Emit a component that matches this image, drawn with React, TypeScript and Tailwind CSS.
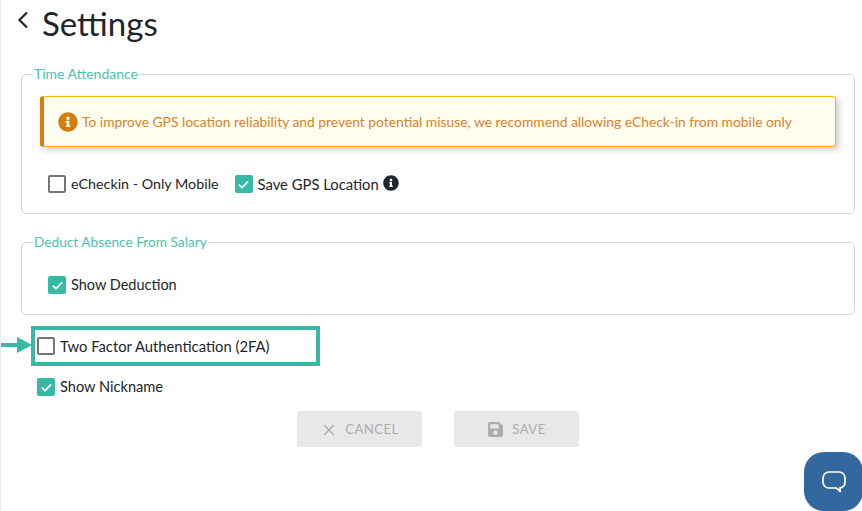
import { FaInfoCircle, FaSave } from "react-icons/fa";
import { X } from "lucide-react";

function Check({ checked, label, textClass }: { checked?: boolean; label: string; textClass: string }) {
  return (
    <label className={`flex items-center gap-[5px] leading-[20px] text-[#212529] ${textClass}`}>
      {checked ? (
        <span className="flex h-[18px] w-[18px] items-center justify-center rounded-[2px] bg-[#36baa5]">
          <svg width="13" height="13" viewBox="0 0 12 12" fill="none" stroke="#fff" strokeWidth="1.6">
            <path d="M1.8 6.2 4.6 9 10.2 3.2" />
          </svg>
        </span>
      ) : (
        <span className="h-[18px] w-[18px] rounded-[2px] border-2 border-[#757575] bg-white" />
      )}
      {label}
    </label>
  );
}

export default function App() {
  return (
    <div className="relative h-[511px] w-[862px] overflow-hidden border-l border-[#eee] bg-white font-['Lato',sans-serif]">
      <div className="flex h-[47px] items-start pl-[16px] pt-[1px]">
        <svg width="13" height="18" viewBox="0 0 13 18" fill="none" stroke="#212529" strokeWidth="2.2" className="mt-[10px]">
          <path d="M10 1.5 2.5 9l7.5 7.5" />
        </svg>
        <h1 className="ml-[12px] text-[33px] leading-[44px] text-[#212529]">Settings</h1>
      </div>

      <div className="pl-[20px] pr-[7px] pt-[18px]">
        <fieldset className="h-[149px] rounded-[5px] border border-[#d4d4d4] pl-[18px] pr-[18px]">
          <legend className="ml-[-7px] px-[1px] text-[14px] leading-[18px] text-[#4cc2af]">Time Attendance</legend>
          <div className="mt-[13px] flex h-[51px] items-center gap-[4px] rounded-[3px] border border-l-4 border-[#ffb300] border-l-[#d17f0e] bg-[#fffdf0] pl-[14px] shadow-[3px_3px_6px_rgba(0,0,0,0.2)]">
            <FaInfoCircle size={20} className="shrink-0 text-[#d17f0e]" />
            <span className="pt-[1px] text-[13.84px] text-[#d9822b]">
              To improve GPS location reliability and prevent potential misuse, we recommend allowing eCheck-in from mobile only
            </span>
          </div>
          <div className="mt-[27px] flex items-center gap-[16px] pl-[8px]">
            <Check label="eCheckin - Only Mobile" textClass="text-[14.3px]" />
            <div className="flex items-center gap-[4px]">
              <Check checked label="Save GPS Location" textClass="text-[14.8px]" />
              <FaInfoCircle size={16} className="mb-[3px] text-[#1c2530]" />
            </div>
          </div>
        </fieldset>

        <fieldset className="mt-[19px] h-[82px] rounded-[5px] border border-[#d4d4d4] pl-[26px]">
          <legend className="ml-[-15px] px-[1px] text-[13.7px] leading-[18px] text-[#4cc2af]">Deduct Absence From Salary</legend>
          <div className="mt-[24px]">
            <Check checked label="Show Deduction" textClass="text-[14.5px]" />
          </div>
        </fieldset>

        <div className="ml-[10px] mt-[11px] flex h-[40px] w-[289px] items-center border-[4px] border-[#36baa5] pl-[2px]">
          <Check label="Two Factor Authentication (2FA)" textClass="text-[14.8px]" />
        </div>
        <div className="mt-[11px] pl-[16px]">
          <Check checked label="Show Nickname" textClass="text-[14.6px]" />
        </div>

        <div className="mt-[14px] flex justify-center gap-[32px]">
          <button className="flex h-[36px] w-[125px] items-center justify-center gap-[7px] rounded-[3px] bg-[#e8e8e8] pt-[1px] text-[13.2px] tracking-[0.4px] text-[#adadad]">
            <X size={18} strokeWidth={1.8} />
            CANCEL
          </button>
          <button className="flex h-[36px] w-[125px] items-center justify-center gap-[8px] rounded-[3px] bg-[#e8e8e8] pt-[1px] text-[13.2px] tracking-[0.4px] text-[#adadad]">
            <FaSave size={17} />
            SAVE
          </button>
        </div>
      </div>

      {/* arrow pointing at the 2FA row */}
      <svg width="32" height="18" viewBox="0 0 32 18" className="absolute left-[-1px] top-[336px]">
        <path d="M0 7h17V1l15 8-15 8v-6H0z" fill="#36baa5" />
      </svg>

      {/* help bubble */}
      <div className="absolute left-[803px] top-[452px] flex h-[59px] w-[59px] items-center justify-center rounded-[20px] bg-[#33689f]">
        <svg width="28" height="28" viewBox="0 0 28 28" fill="none" stroke="#fff" strokeWidth="1.7" strokeLinejoin="round">
          <path d="M9 4h10a6 6 0 0 1 6 6v4a6 6 0 0 1-5 5.9l.3 3.6-4-3.5H9a6 6 0 0 1-6-6v-4a6 6 0 0 1 6-6z" />
        </svg>
      </div>
    </div>
  );
}
